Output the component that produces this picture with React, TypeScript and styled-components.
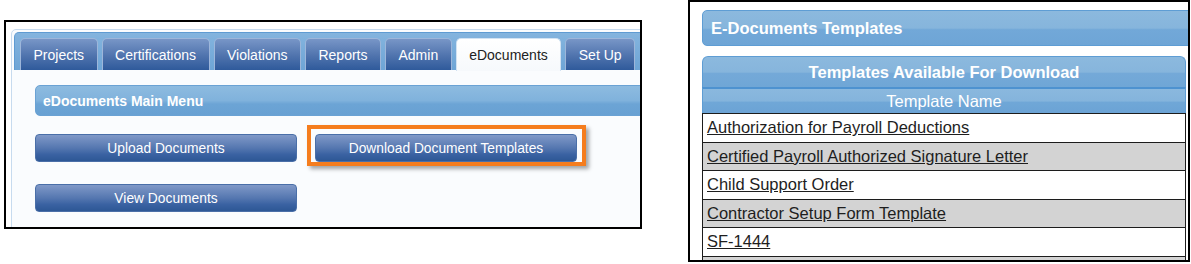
import styled, { createGlobalStyle } from 'styled-components';

const GlobalStyle = createGlobalStyle`
  html, body {
    margin: 0;
    padding: 0;
    background: #ffffff;
  }
  body {
    font-family: 'Liberation Sans', Arial, sans-serif;
  }
`;

const tabs = ['Projects', 'Certifications', 'Violations', 'Reports', 'Admin', 'eDocuments', 'Set Up'];

const templates = [
  'Authorization for Payroll Deductions',
  'Certified Payroll Authorized Signature Letter',
  'Child Support Order',
  'Contractor Setup Form Template',
  'SF-1444',
  '',
];

function MainMenuPanel() {
  return (
    <LeftFrame>
      <TabContainer>
        <TabBar>
          {tabs.map((tab) => (
            <Tab key={tab} $active={tab === 'eDocuments'}>
              {tab}
            </Tab>
          ))}
        </TabBar>

        <Content>
          <MenuHeader>eDocuments Main Menu</MenuHeader>

          <ButtonGrid>
            <MenuButton>Upload Documents</MenuButton>
            <Highlight>
              <MenuButton>Download Document Templates</MenuButton>
            </Highlight>
            <MenuButton>View Documents</MenuButton>
          </ButtonGrid>
        </Content>
      </TabContainer>
    </LeftFrame>
  );
}

function TemplatesPanel() {
  return (
    <RightFrame>
      <PageHeader>E-Documents Templates</PageHeader>

      <TemplateTable>
        <TableTitle>Templates Available For Download</TableTitle>
        <ColumnHeader>Template Name</ColumnHeader>
        {templates.map((name, i) => (
          <Row key={i} $alt={i % 2 === 1}>
            {name && <TemplateLink href="#">{name}</TemplateLink>}
          </Row>
        ))}
      </TemplateTable>
    </RightFrame>
  );
}

export default function App() {
  return (
    <>
      <GlobalStyle />
      <Page>
        <MainMenuPanel />
        <TemplatesPanel />
      </Page>
    </>
  );
}

const Page = styled.div`
  display: flex;
  align-items: flex-start;
  gap: 46px;
  width: 1191px;
  height: 264px;
  padding-left: 4px;
  box-sizing: border-box;
`;

/* ---------- left: eDocuments main menu ---------- */

const LeftFrame = styled.div`
  margin-top: 20px;
  width: 638px;
  height: 209px;
  box-sizing: border-box;
  border: 2px solid #000;
  background: #fff;
  overflow: hidden;
  padding: 7px 0 0 5px;
`;

const TabContainer = styled.div`
  width: 680px;
  height: 220px;
  box-sizing: border-box;
  border: 1px solid #c7dbef;
  border-radius: 5px;
  background: #fafcfe;
  padding: 2px;
`;

const TabBar = styled.div`
  display: flex;
  align-items: flex-end;
  gap: 4px;
  height: 38px;
  box-sizing: border-box;
  padding: 0 0 0 5px;
  border: 1px solid #5f9bd2;
  border-bottom: none;
  border-radius: 5px 5px 0 0;
  background: linear-gradient(to bottom, #84b4de, #6ea5d6);
`;

const Tab = styled.div<{ $active?: boolean }>`
  height: ${({ $active }) => ($active ? '33px' : '32px')};
  margin-bottom: ${({ $active }) => ($active ? '-1px' : '0')};
  box-sizing: border-box;
  padding: 0 12.5px;
  display: flex;
  align-items: center;
  font-size: 14px;
  border: 1px solid ${({ $active }) => ($active ? '#d2e2f2' : '#9db6da')};
  border-bottom: none;
  border-radius: 5px 5px 0 0;
  color: ${({ $active }) => ($active ? '#222' : '#fff')};
  background: ${({ $active }) =>
    $active
      ? 'linear-gradient(to bottom, #ffffff, #f6f9fc)'
      : 'linear-gradient(to bottom, #7896c7, #4f73ad 55%, #2f5a9b)'};
`;

const Content = styled.div`
  padding: 15px 0 0 21px;
`;

const MenuHeader = styled.div`
  height: 31px;
  box-sizing: border-box;
  padding-left: 7px;
  display: flex;
  align-items: center;
  border: 1px solid #6aa2d4;
  border-radius: 5px;
  background: linear-gradient(to bottom, #8dbbe0, #80b2dc 50%, #6ca4d5 62%, #68a1d3);
  color: #fff;
  font-size: 14px;
  font-weight: bold;
`;

const ButtonGrid = styled.div`
  display: grid;
  grid-template-columns: 262px 262px;
  column-gap: 18px;
  row-gap: 22px;
  margin-top: 18px;
`;

const MenuButton = styled.div`
  height: 28px;
  box-sizing: border-box;
  display: flex;
  align-items: center;
  justify-content: center;
  border: 1px solid #4a6fa8;
  border-radius: 4px;
  background: linear-gradient(to bottom, #8099c8, #5577b0 50%, #3a62a2 75%, #2d5795);
  color: #fff;
  font-size: 13.8px;
`;

const Highlight = styled.div`
  position: relative;

  &::after {
    content: '';
    position: absolute;
    top: -9px;
    left: -8px;
    right: -9px;
    bottom: -4px;
    border: 4px solid #f57d1e;
    box-shadow: 3px 3px 4px rgba(0, 0, 0, 0.35);
    pointer-events: none;
  }
`;

/* ---------- right: templates list ---------- */

const RightFrame = styled.div`
  width: 502px;
  height: 262px;
  box-sizing: border-box;
  border: 2px solid #000;
  background: #fff;
  overflow: hidden;
  padding: 8px 0 0 12px;
`;

const PageHeader = styled.div`
  width: 520px;
  height: 36px;
  box-sizing: border-box;
  padding-left: 8px;
  display: flex;
  align-items: center;
  border: 1px solid #5e9dd4;
  border-radius: 5px;
  background: linear-gradient(to bottom, #8cb9de, #86b5dc 50%, #72a8d8 55%, #6ea5d6);
  color: #fff;
  font-size: 16.5px;
  font-weight: bold;
`;

const TemplateTable = styled.div`
  width: 484px;
  margin-top: 10px;
`;

const TableTitle = styled.div`
  height: 31px;
  box-sizing: border-box;
  display: flex;
  align-items: center;
  justify-content: center;
  border: 1px solid #5e9dd4;
  border-bottom: none;
  border-radius: 6px 6px 0 0;
  background: linear-gradient(to bottom, #8cb9de, #86b5dc 50%, #74a9d8 55%, #6fa6d6);
  color: #fff;
  font-size: 16.5px;
  font-weight: bold;
`;

const ColumnHeader = styled.div`
  height: 26px;
  box-sizing: border-box;
  display: flex;
  align-items: center;
  justify-content: center;
  border: 1px solid #5e9dd4;
  border-top: 2px solid #4d92d0;
  border-bottom: none;
  background: linear-gradient(to bottom, #8ab8de, #84b4dc 50%, #70a7d7 55%, #6ba3d5);
  color: #fff;
  font-size: 16.5px;
`;

const Row = styled.div<{ $alt?: boolean }>`
  height: 28.5px;
  box-sizing: border-box;
  display: flex;
  align-items: center;
  padding-left: 4px;
  border: 1px solid #1c1c1c;
  border-bottom: none;
  background: ${({ $alt }) => ($alt ? '#d3d3d3' : '#fff')};
`;

const TemplateLink = styled.a`
  color: #1e1e1e;
  font-size: 16.5px;
  text-decoration: underline;
`;
